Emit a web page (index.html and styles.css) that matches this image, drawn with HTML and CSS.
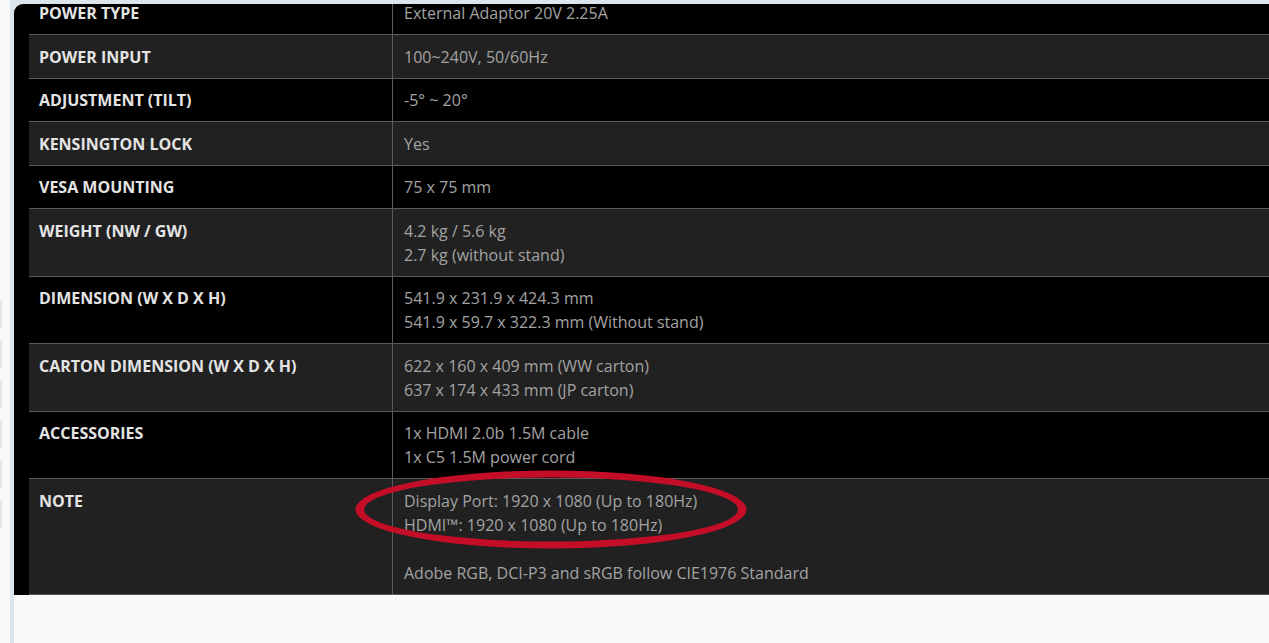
FILE: index.html
```html
<!DOCTYPE html>
<html lang="en">
<head>
<meta charset="utf-8">
<title>Specifications</title>
<link rel="stylesheet" href="styles.css">
</head>
<body>
<div class="page">
  <div class="rail">
    <span class="pill"></span><span class="pill"></span><span class="pill"></span>
    <span class="pill"></span><span class="pill"></span><span class="pill"></span>
  </div>
  <div class="frame">
    <div class="card">
      <table class="spec-table">
        <tr class="dark"><th>POWER TYPE</th><td>External Adaptor 20V 2.25A</td></tr>
        <tr class="grey"><th>POWER INPUT</th><td>100~240V, 50/60Hz</td></tr>
        <tr class="dark"><th>ADJUSTMENT (TILT)</th><td>-5° ~ 20°</td></tr>
        <tr class="grey"><th>KENSINGTON LOCK</th><td>Yes</td></tr>
        <tr class="dark"><th>VESA MOUNTING</th><td>75 x 75 mm</td></tr>
        <tr class="grey"><th>WEIGHT (NW / GW)</th><td>4.2 kg / 5.6 kg<br>2.7 kg (without stand)</td></tr>
        <tr class="dark"><th>DIMENSION (W X D X H)</th><td>541.9 x 231.9 x 424.3 mm<br>541.9 x 59.7 x 322.3 mm (Without stand)</td></tr>
        <tr class="grey"><th>CARTON DIMENSION (W X D X H)</th><td>622 x 160 x 409 mm (WW carton)<br>637 x 174 x 433 mm (JP carton)</td></tr>
        <tr class="dark"><th>ACCESSORIES</th><td>1x HDMI 2.0b 1.5M cable<br>1x C5 1.5M power cord</td></tr>
        <tr class="grey"><th>NOTE</th><td class="note">Display Port: 1920 x 1080 (Up to 180Hz)<br>HDMI™: 1920 x 1080 (Up to 180Hz)<br><br>Adobe RGB, DCI-P3 and sRGB follow CIE1976 Standard<svg class="circle" width="400" height="84" viewBox="0 0 400 84"><path fill="#c40e28" fill-rule="evenodd" d="M0.5 40.5 A195.5 39 0 1 0 391.5 40.5 A195.5 39 0 1 0 0.5 40.5 Z M9 40.5 A187 32 0 1 0 383 40.5 A187 32 0 1 0 9 40.5 Z"/></svg></td></tr>
      </table>
    </div>
  </div>
</div>
</body>
</html>
```
FILE: styles.css
```css
html, body {
  margin: 0;
  padding: 0;
  height: 100%;
  overflow: hidden;
  background: #f8f9fa;
}
body {
  font-family: "Open Sans", "Liberation Sans", sans-serif;
  font-size: 16px;
}
.page {
  display: flex;
  height: 643px;
}
.rail {
  width: 10px;
  flex: 0 0 10px;
  display: flex;
  flex-direction: column;
  gap: 12px;
  padding-top: 300px;
  box-sizing: border-box;
}
.pill {
  display: block;
  width: 2px;
  height: 28px;
  background: #e3e5e7;
  border-radius: 0 3px 3px 0;
}
.frame {
  flex: 1;
  background: #dde5ec;
  padding: 4px 0 0 4px;
  display: flex;
  flex-direction: column;
}
.frame::after {
  content: "";
  flex: 1;
  background: #f8f9fa;
}
.card {
  background: #000;
  border-top-left-radius: 9px;
  padding-left: 15px;
  overflow: hidden;
}
.spec-table {
  width: 100%;
  border-collapse: collapse;
  margin-top: -12px;
}
.spec-table tr.dark { background: #000; }
.spec-table tr.grey { background: #212121; }
.spec-table tr { border-bottom: 1px solid #5a5a5a; }
.spec-table th,
.spec-table td {
  text-align: left;
  vertical-align: top;
  line-height: 24px;
  padding: 9.3px 10px 9.2px 10px;
}
.spec-table th {
  width: 343px;
  color: #e4e4e4;
  font-weight: 700;
  border-right: 1px solid #5a5a5a;
}
.spec-table td {
  color: #a3a3a3;
  font-weight: 400;
  padding-left: 11px;
}
.note {
  position: relative;
}
.circle {
  position: absolute;
  left: -38px;
  top: -10px;
}
```
